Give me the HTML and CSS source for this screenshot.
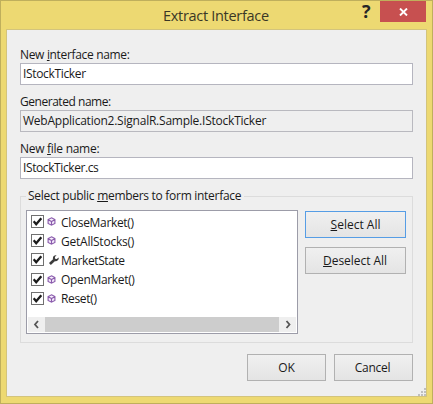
FILE: index.html
```html
<!DOCTYPE html>
<html lang="en">
<head>
<meta charset="utf-8">
<title>Extract Interface</title>
<link rel="stylesheet" href="styles.css">
</head>
<body>
<svg class="defs" aria-hidden="true">
  <symbol id="check" viewBox="0 0 11 11"><path d="M1.7 5.2 4.2 8.2 9.3 2.2" fill="none" stroke="#1c1c1c" stroke-width="2.3"/></symbol>
  <symbol id="method" viewBox="0 0 9 9"><path d="M4.5.8 7.9 2.5V6.5L4.5 8.2 1.1 6.5V2.5ZM1.3 2.7 4.5 4.5 7.7 2.7M4.5 4.5V8" fill="#f4eafa" stroke="#8a5bac" stroke-width="1.15"/></symbol>
  <symbol id="wrench" viewBox="0 0 10 10"><path d="M.9 9 5.4 4.7" stroke="#3c3c3c" stroke-width="2.6" fill="none"/><path d="M7.6.3C5.2-.1 3.4 1.8 4 4L6 6.2C8.2 6.7 10.2 4.9 9.6 2.5L7.8 4.1 6.1 3.8 5.9 2.1Z" fill="#3c3c3c"/></symbol>
</svg>
<div class="window">
  <header class="titlebar">
    <h1 class="title">Extract Interface</h1>
    <span class="help">?</span>
    <button class="close" aria-label="Close"><svg width="9" height="8" viewBox="0 0 9 8"><path d="M1 .5 8 7.5M8 .5 1 7.5" stroke="#fff" stroke-width="1.9"/></svg></button>
  </header>
  <main class="client">
    <label class="label label-interface">New <u>i</u>nterface name:</label>
    <div class="field"><span class="interface-value">IStockTicker</span></div>
    <label class="label label-generated">Generated name:</label>
    <div class="field readonly"><span class="generated-value">WebApplication2.SignalR.Sample.IStockTicker</span></div>
    <label class="label label-file">New <u>f</u>ile name:</label>
    <div class="field"><span class="file-value">IStockTicker.cs</span></div>
    <fieldset class="group">
      <legend class="legend">Select public <u>m</u>embers to form interface</legend>
      <div class="columns">
        <div class="list">
          <ul class="rows">
            <li class="row"><svg class="box"><use href="#check"/></svg><svg class="icon"><use href="#method"/></svg><span>CloseMarket()</span></li>
            <li class="row"><svg class="box"><use href="#check"/></svg><svg class="icon"><use href="#method"/></svg><span class="stocks">GetAllStocks()</span></li>
            <li class="row"><svg class="box"><use href="#check"/></svg><svg class="icon wrench"><use href="#wrench"/></svg><span class="state">MarketState</span></li>
            <li class="row"><svg class="box"><use href="#check"/></svg><svg class="icon"><use href="#method"/></svg><span>OpenMarket()</span></li>
            <li class="row"><svg class="box"><use href="#check"/></svg><svg class="icon"><use href="#method"/></svg><span>Reset()</span></li>
          </ul>
          <div class="scrollbar">
            <svg class="arrow" viewBox="0 0 17 15"><path d="M10 4 7 7.5 10 11" fill="none" stroke="#555" stroke-width="1.8"/></svg>
            <div class="thumb"></div>
            <svg class="arrow" viewBox="0 0 17 15"><path d="M7.5 4 10.5 7.5 7.5 11" fill="none" stroke="#555" stroke-width="1.8"/></svg>
          </div>
        </div>
        <div class="actions">
          <button class="btn focused"><u>S</u>elect All</button>
          <button class="btn deselect"><u>D</u>eselect All</button>
        </div>
      </div>
    </fieldset>
    <footer class="footer">
      <button class="btn ok">OK</button>
      <button class="btn cancel">Cancel</button>
    </footer>
    <svg class="grip" width="8" height="8" viewBox="0 0 8 8"><path d="M6 0h2v2h-2zM3 3h2v2h-2zM6 3h2v2h-2zM0 6h2v2h-2zM3 6h2v2h-2zM6 6h2v2h-2z" fill="#bfbfbf"/></svg>
  </main>
</div>
</body>
</html>
```
FILE: styles.css
```css
* { box-sizing: border-box; }
body {
  margin: 0;
  font: 12px/16px "Open Sans", "Noto Sans", sans-serif;
  color: #1a1a1a;
}
.defs { display: none; }
u { text-decoration: underline; text-decoration-thickness: 1px; text-underline-offset: 1px; }
.window {
  width: 433px;
  height: 404px;
  padding: 0 6px 6px 5px;
  border: 1px solid #bfaf5c;
  background: #edd972;
}
.titlebar { display: flex; height: 28px; align-items: flex-start; }
.title {
  margin: 5px 0 0 157px;
  width: 190px;
  font-size: 14.5px;
  line-height: 20px;
  font-weight: 400;
  letter-spacing: -0.3px;
  color: #3a3726;
  white-space: nowrap;
}
.help {
  flex: none;
  width: 28px;
  margin-left: auto;
  padding-left: 10px;
  font: 700 18px/20px "Open Sans", sans-serif;
  color: #262626;
}
.close {
  display: flex;
  flex: none;
  width: 46px;
  height: 21px;
  align-items: center;
  justify-content: center;
  padding: 0;
  border: 0;
  background: #c75050;
}
.client {
  position: relative;
  height: 368px;
  width: 421px;
  padding: 17px 13px 0 13px;
  border: 1px solid #d3c47c;
  background: #efefef;
}
.label { display: block; height: 16px; white-space: nowrap; }
.label-interface { letter-spacing: -0.33px; }
.label-generated { letter-spacing: -0.46px; }
.label-file { letter-spacing: -0.28px; }
.field {
  height: 22px;
  margin-bottom: 9px;
  padding: 2px 0 0 2px;
  border: 1px solid #b5b5bf;
  background: #fff;
  white-space: nowrap;
}
.interface-value { letter-spacing: -0.34px; }
.generated-value { letter-spacing: -0.23px; }
.file-value { letter-spacing: -0.4px; }
.readonly { background: #efefef; border-color: #b9b9bf; }
.group {
  height: 155px;
  min-width: 0;
  margin: 0;
  padding: 0 6px 0 5px;
  border: 1px solid #dcdcdc;
}
.legend { height: 16px; margin-left: 0; padding: 0 3px 0 2px; letter-spacing: -0.29px; white-space: nowrap; }
.columns { display: flex; justify-content: space-between; padding-top: 6px; }
.list { width: 272px; height: 124px; border: 1px solid #9c9ca8; background: #fff; padding: 1px; }
.rows { height: 105px; margin: 0; padding: 0 0 0 3px; list-style: none; letter-spacing: -0.33px; }
.stocks { letter-spacing: -0.23px; }
.state { letter-spacing: -0.42px; }
.row { display: flex; height: 19.2px; align-items: center; white-space: nowrap; }
.row span { padding-top: 2px; }
.box { width: 13px; height: 13px; border: 1px solid #707070; background: #fff; }
.icon { width: 9px; height: 9px; margin: 0 5px 0 3px; }
.wrench { width: 10px; height: 10px; margin: 0 2px 0 5px; }
.scrollbar { display: flex; height: 15px; background: #efefef; }
.thumb { flex: 1; background: #cdcdcd; }
.arrow { width: 17px; height: 15px; }
.actions { display: flex; flex-direction: column; gap: 9px; padding-top: 1px; }
.btn {
  width: 101px;
  height: 27px;
  padding: 0;
  border: 1px solid #b1b1b1;
  background: linear-gradient(#f0f0f0, #e4e4e4);
  font: inherit;
  color: inherit;
}
.btn.focused { border-color: #569de5; }
.deselect { padding-right: 1px; letter-spacing: -0.05px; }
.footer { display: flex; justify-content: flex-end; gap: 8px; margin-top: 11px; }
.footer .btn { width: 79px; }
.footer .cancel { padding-right: 2px; letter-spacing: -0.3px; }
.grip { position: absolute; right: 0; bottom: 0; }
```
